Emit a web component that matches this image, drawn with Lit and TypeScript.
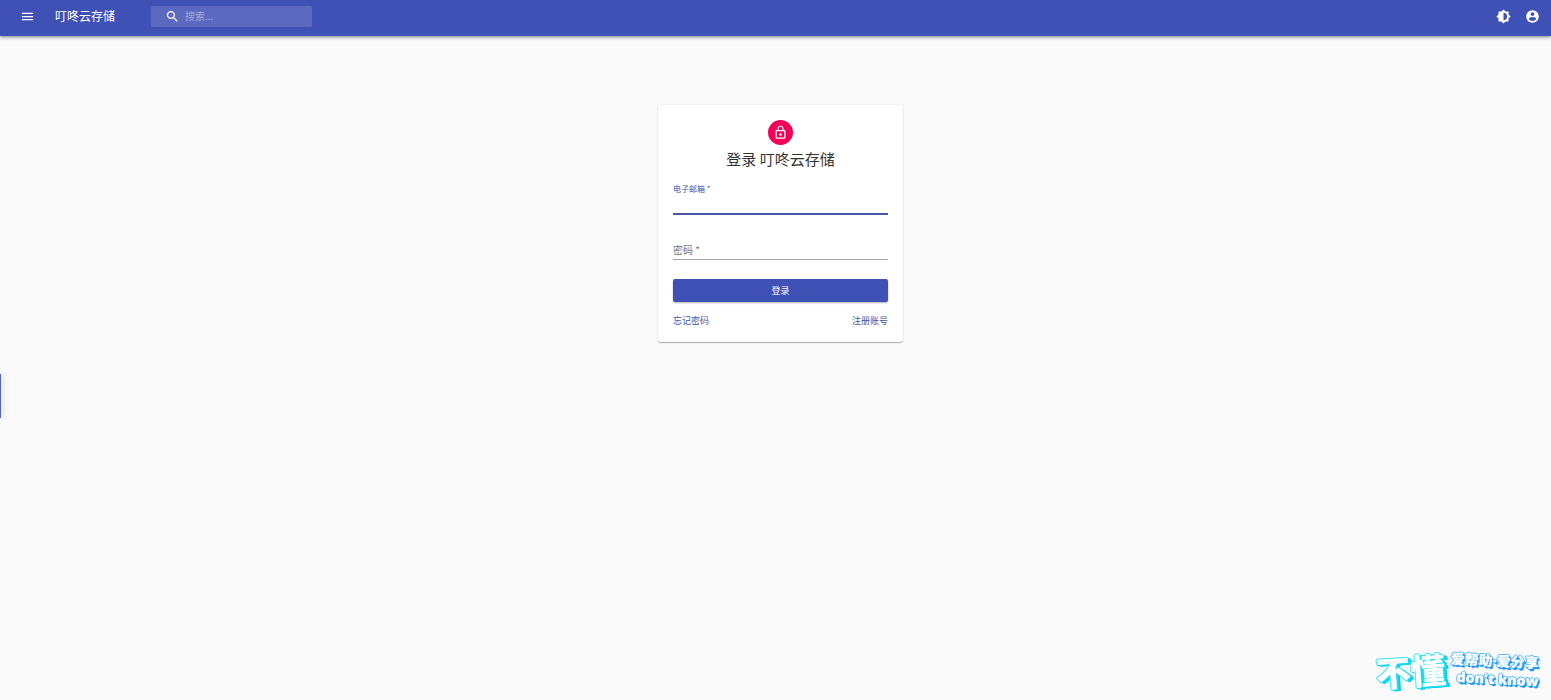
import { LitElement, html, css } from "lit";
import { customElement } from "lit/decorators.js";

@customElement("app-bar")
class AppBar extends LitElement {
  static styles = css`
    :host { display: block; position: relative; z-index: 2; }
    .bar {
      display: flex; align-items: center; box-sizing: border-box;
      height: 36px; padding: 0 11px 4px 20px;
      background: #3f51b5; color: #fff;
      box-shadow: 0 1px 3px rgba(0, 0, 0, 0.35), 0 2px 5px rgba(0, 0, 0, 0.14);
    }
    .icon-button {
      display: flex; padding: 0; border: 0; background: none; color: inherit; cursor: pointer;
    }
    svg { display: block; width: 15px; height: 15px; fill: currentColor; }
    .title { margin: 0 36px 0 20px; font-size: 12px; line-height: 20px; font-weight: 400; white-space: nowrap; }
    .search {
      display: flex; align-items: center; box-sizing: border-box; gap: 5px;
      width: 161px; height: 21px; padding: 0 8px 0 14px;
      border-radius: 2px; background: rgba(255, 255, 255, 0.15);
    }
    .search svg { flex: none; }
    .search input {
      flex: 1; min-width: 0; padding: 0; border: 0; outline: 0; background: none;
      color: inherit; font: inherit; font-size: 10px; line-height: 16px;
    }
    .search input::placeholder { color: #fff; opacity: 0.42; }
    .actions { display: flex; gap: 14px; margin-left: auto; }
  `;

  render() {
    return html`
      <header class="bar">
        <button class="icon-button" aria-label="菜单">
          <svg viewBox="0 0 24 24"><path d="M3 18h18v-2H3v2zm0-5h18v-2H3v2zm0-7v2h18V6H3z" /></svg>
        </button>
        <div class="title">叮咚云存储</div>
        <label class="search">
          <svg viewBox="0 0 24 24"><path d="M15.5 14h-.79l-.28-.27C15.41 12.59 16 11.11 16 9.5 16 5.91 13.09 3 9.5 3S3 5.91 3 9.5 5.91 16 9.5 16c1.61 0 3.09-.59 4.23-1.57l.27.28v.79l5 4.99L20.49 19l-4.99-5zm-6 0C7.01 14 5 11.99 5 9.5S7.01 5 9.5 5 14 7.01 14 9.5 11.99 14 9.5 14z" /></svg>
          <input type="text" placeholder="搜索..." aria-label="搜索" />
        </label>
        <div class="actions">
          <button class="icon-button" aria-label="切换主题">
            <svg viewBox="0 0 24 24"><path d="M20 15.31L23.31 12 20 8.69V4h-4.69L12 .69 8.69 4H4v4.69L.69 12 4 15.31V20h4.69L12 23.31 15.31 20H20v-4.69zM12 18V6c3.31 0 6 2.69 6 6s-2.69 6-6 6z" /></svg>
          </button>
          <button class="icon-button" aria-label="账号">
            <svg viewBox="0 0 24 24"><path d="M12 2C6.48 2 2 6.48 2 12s4.48 10 10 10 10-4.48 10-10S17.52 2 12 2zm0 3c1.66 0 3 1.34 3 3s-1.34 3-3 3-3-1.34-3-3 1.34-3 3-3zm0 14.2c-2.5 0-4.71-1.28-6-3.22.03-1.99 4-3.08 6-3.08 1.99 0 5.97 1.09 6 3.08-1.29 1.94-3.5 3.22-6 3.22z" /></svg>
          </button>
        </div>
      </header>
    `;
  }
}

@customElement("login-card")
class LoginCard extends LitElement {
  static styles = css`
    :host { display: block; width: 245px; }
    .card {
      display: flex; flex-direction: column; align-items: center;
      padding: 15px; border-radius: 3px; background: #fff; color: #333;
      box-shadow: 0 1px 1px rgba(0, 0, 0, 0.3), 0 0 2px rgba(0, 0, 0, 0.12);
    }
    .avatar {
      display: flex; align-items: center; justify-content: center;
      width: 25px; height: 25px; border-radius: 50%; background: #f50057; color: #fff;
    }
    .avatar svg { width: 15px; height: 15px; fill: currentColor; }
    h1 { margin: 4px 0 0; font-size: 15px; line-height: 20px; font-weight: 400; }
    form { display: flex; flex-direction: column; align-self: stretch; }
    .field { display: flex; flex-direction: column; color: #757575; }
    .field label { font-size: 10px; line-height: 12px; }
    .field input {
      box-sizing: border-box; width: 100%; height: 20px; padding: 0; border: 0; outline: 0;
      border-bottom: 2px solid #4858a6; background: none; font: inherit; font-size: 10px;
    }
    .email { margin-top: 14px; color: #4355b0; }
    .email label { font-size: 8px; }
    .password { display: grid; align-items: center; margin-top: 25px; }
    .password label, .password input { grid-area: 1 / 1; }
    .password input { border-bottom: 1px solid #a5a5a5; }
    .submit {
      height: 23px; margin-top: 19px; padding: 0; border: 0; border-radius: 2px;
      background: #3f51b5; color: #fff; font: inherit; font-size: 9px; line-height: 12px;
      box-shadow: 0 1px 2px rgba(0, 0, 0, 0.3); cursor: pointer;
    }
    .links { display: flex; justify-content: space-between; align-self: stretch; margin-top: 12px; }
    .links a { color: #4657a8; font-size: 9px; line-height: 13px; text-decoration: none; }
  `;

  render() {
    return html`
      <section class="card">
        <div class="avatar">
          <svg viewBox="0 0 24 24"><path d="M12 17c1.1 0 2-.9 2-2s-.9-2-2-2-2 .9-2 2 .9 2 2 2zm6-9h-1V6c0-2.76-2.24-5-5-5S7 3.24 7 6v2H6c-1.1 0-2 .9-2 2v10c0 1.1.9 2 2 2h12c1.1 0 2-.9 2-2V10c0-1.1-.9-2-2-2zM8.9 6c0-1.71 1.39-3.1 3.1-3.1s3.1 1.39 3.1 3.1v2H8.9V6zM18 20H6V10h12v10z" /></svg>
        </div>
        <h1>登录 叮咚云存储</h1>
        <form @submit=${(e: Event) => e.preventDefault()}>
          <div class="field email">
            <label for="email">电子邮箱 *</label>
            <input id="email" type="email" required />
          </div>
          <div class="field password">
            <label for="password">密码 *</label>
            <input id="password" type="password" required />
          </div>
          <button class="submit" type="submit">登录</button>
        </form>
        <nav class="links">
          <a href="#forget">忘记密码</a>
          <a href="#signup">注册账号</a>
        </nav>
      </section>
    `;
  }
}

@customElement("brand-mark")
class BrandMark extends LitElement {
  static styles = css`
    :host { display: block; }
    .mark { display: flex; align-items: center; gap: 5px; color: #fff; font-weight: 900; white-space: nowrap; }
    .big {
      font-size: 35px; line-height: 40px; transform: rotate(-4deg);
      text-shadow: -1px 0 #2be6f6, 0 -1px #2be6f6, 1px 0 #14e0f5, 0 1px #14e0f5, 1px 1px #10dcf2,
        2px 1px #10dcf2, 3px 1px #10d4f0, 3px 2px #10d4f0, 4px 2px #10c4ea;
    }
    .side { display: flex; flex-direction: column; transform: rotate(3deg); font-family: "Open Sans", "Noto Sans CJK SC", sans-serif; }
    .cn, .en {
      text-shadow: -1px 0 #4db4f5, 0 -1px #5cbcf7, 1px 0 #38a8f0, 0 1px #2e9ff0, 1px 1px #2196f3, 2px 2px #2196f3;
    }
    .cn { font-size: 14px; line-height: 18px; }
    .en { padding-left: 7px; font-size: 14px; line-height: 18px; }
  `;

  render() {
    return html`
      <div class="mark">
        <span class="big">不懂</span>
        <span class="side"><span class="cn">爱帮助·爱分享</span><span class="en">don't know</span></span>
      </div>
    `;
  }
}

@customElement("app-root")
class AppRoot extends LitElement {
  static styles = css`
    :host {
      display: flex; flex-direction: column; position: relative; min-height: 100vh;
      background: #fafafa; font-family: "Noto Sans CJK SC", sans-serif;
    }
    .content { display: flex; justify-content: center; padding: 69px 0 69px 10px; }
    .drawer-edge {
      position: absolute; left: 0; top: 374px; width: 1px; height: 44px;
      background: #5266b0; box-shadow: 1px 0 6px rgba(60, 90, 150, 0.6);
    }
    .mark { position: absolute; right: 12px; bottom: 10px; }
  `;

  render() {
    return html`
      <app-bar></app-bar>
      <main class="content"><login-card></login-card></main>
      <div class="drawer-edge"></div>
      <brand-mark class="mark"></brand-mark>
    `;
  }
}
